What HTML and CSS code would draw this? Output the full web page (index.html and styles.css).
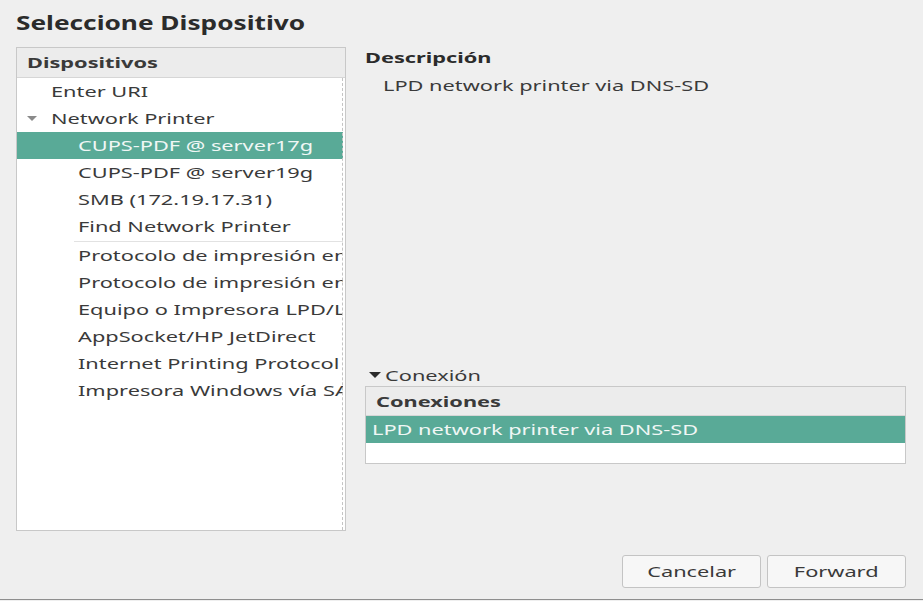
FILE: index.html
```html
<!DOCTYPE html>
<html>
<head>
<meta charset="utf-8">
<link rel="stylesheet" href="styles.css">
</head>
<body>
<div class="dialog">
  <h1 class="title"><span class="wide-title">Seleccione Dispositivo</span></h1>
  <div class="main">
    <div class="tree">
      <div class="tree-head"><span class="wide">Dispositivos</span></div>
      <div class="tree-body">
        <div class="row lvl1"><span class="wide">Enter URI</span></div>
        <div class="row lvl0"><span class="expander"></span><span class="wide">Network Printer</span></div>
        <div class="row lvl2 sel"><span class="wide">CUPS-PDF @ server17g</span></div>
        <div class="row lvl2"><span class="wide">CUPS-PDF @ server19g</span></div>
        <div class="row lvl2"><span class="wide">SMB (172.19.17.31)</span></div>
        <div class="row lvl2"><span class="wide">Find Network Printer</span></div>
        <div class="sep"></div>
        <div class="row lvl2"><span class="wide">Protocolo de impresión en Internet (ipp)</span></div>
        <div class="row lvl2"><span class="wide">Protocolo de impresión en Internet (https)</span></div>
        <div class="row lvl2"><span class="wide">Equipo o Impresora LPD/LPR</span></div>
        <div class="row lvl2"><span class="wide">AppSocket/HP JetDirect</span></div>
        <div class="row lvl2"><span class="wide">Internet Printing Protocol (http)</span></div>
        <div class="row lvl2"><span class="wide">Impresora Windows vía SAMBA</span></div>
      </div>
    </div>
    <div class="side">
      <div class="desc-title"><span class="wide">Descripción</span></div>
      <div class="desc-text"><span class="wide">LPD network printer via DNS-SD</span></div>
      <div class="spacer"></div>
      <div class="conn-toggle"><span class="arrow"></span><span class="wide">Conexión</span></div>
      <div class="conn-box">
        <div class="conn-head"><span class="wide">Conexiones</span></div>
        <div class="conn-row sel"><span class="wide">LPD network printer via DNS-SD</span></div>
        <div class="conn-empty"></div>
      </div>
    </div>
  </div>
  <div class="buttons">
    <button class="btn"><span class="wide-c">Cancelar</span></button>
    <button class="btn"><span class="wide-c">Forward</span></button>
  </div>
</div>
</body>
</html>
```
FILE: styles.css
```css
html, body {
  margin: 0;
  padding: 0;
  background: #efefef;
  height: 100%;
}
body {
  font-family: "Noto Sans", "Open Sans", sans-serif;
  color: #333333;
  font-size: 15px;
}
.wide, .wide-c, .wide-title {
  display: inline-block;
  transform: scaleX(1.45);
  transform-origin: left center;
  white-space: nowrap;
}
.wide-c { transform-origin: center center; }
.wide-title { transform: scaleX(1.38); }
.dialog {
  height: 600px;
  border-bottom: 1px solid #8e8e8e;
  display: flex;
  flex-direction: column;
  box-sizing: border-box;
}
.title {
  margin: 0;
  font-size: 19px;
  font-weight: bold;
  line-height: 26px;
  padding: 10px 0 0 16px;
  color: #2b2b2b;
}
.main {
  display: flex;
  padding: 11px 17px 0 16px;
  gap: 18px;
}
.tree {
  width: 330px;
  height: 484px;
  border: 1px solid #c8c8c8;
  background: #ffffff;
  box-sizing: border-box;
  display: flex;
  flex-direction: column;
  overflow: hidden;
  flex-shrink: 0;
}
.tree-head {
  height: 30px;
  line-height: 29px;
  background: #ececec;
  border-bottom: 1px solid #d6d6d6;
  box-sizing: border-box;
  font-weight: bold;
  padding-left: 10px;
  color: #3a3a3a;
  white-space: nowrap;
}
.tree-body {
  flex: 1;
  position: relative;
  overflow: hidden;
}
.tree-body::after {
  content: "";
  position: absolute;
  top: 0;
  bottom: 0;
  right: 2px;
  border-right: 1px dashed #c4c4c4;
}
.row {
  height: 27px;
  line-height: 27px;
  white-space: nowrap;
  overflow: hidden;
  color: #3a3a3a;
  margin-right: 2px;
}
.lvl0 {
  padding-left: 10px;
  display: flex;
  align-items: center;
}
.lvl1 { padding-left: 34px; }
.lvl2 { padding-left: 61px; }
.row.sel {
  background: #59aa97;
  color: #f0f7f5;
}
.expander {
  width: 0;
  height: 0;
  border-left: 5px solid transparent;
  border-right: 5px solid transparent;
  border-top: 5px solid #8a8a8a;
  margin-right: 14px;
  flex-shrink: 0;
}
.sep {
  height: 1px;
  background: #e2e2e2;
  margin: 1px 2px 0 57px;
}
.side {
  flex: 1;
  display: flex;
  flex-direction: column;
  height: 417px;
}
.desc-title {
  font-weight: bold;
  line-height: 22px;
  padding-left: 1px;
  margin-top: -1px;
  color: #2b2b2b;
}
.desc-text {
  padding-left: 19px;
  line-height: 24px;
  margin-top: 5px;
  color: #3a3a3a;
}
.spacer { flex: 1; }
.conn-toggle {
  display: flex;
  align-items: center;
  padding-left: 5px;
  line-height: 20px;
  margin-top: -2px;
  color: #3a3a3a;
}
.arrow {
  width: 0;
  height: 0;
  border-left: 6px solid transparent;
  border-right: 6px solid transparent;
  border-top: 6px solid #2b2b2b;
  margin-right: 4px;
  flex-shrink: 0;
}
.conn-box {
  margin-top: 1px;
  margin-left: 1px;
  border: 1px solid #c8c8c8;
  background: #ffffff;
}
.conn-head {
  height: 28px;
  line-height: 28px;
  background: #ececec;
  border-bottom: 1px solid #d6d6d6;
  font-weight: bold;
  padding-left: 10px;
  color: #3a3a3a;
}
.conn-row {
  height: 27px;
  line-height: 27px;
  padding-left: 6px;
}
.conn-row.sel {
  background: #59aa97;
  color: #f0f7f5;
}
.conn-empty { height: 20px; }
.buttons {
  margin-top: auto;
  display: flex;
  justify-content: flex-end;
  gap: 6px;
  padding: 0 17px 11px 0;
}
.btn {
  width: 139px;
  height: 33px;
  border: 1px solid #c4c4c4;
  border-radius: 3px;
  background: #f7f7f7;
  font-family: "Noto Sans", "Open Sans", sans-serif;
  font-size: 15px;
  line-height: 20px;
  color: #3a3a3a;
  padding: 0 0 2px 0;
}
```
